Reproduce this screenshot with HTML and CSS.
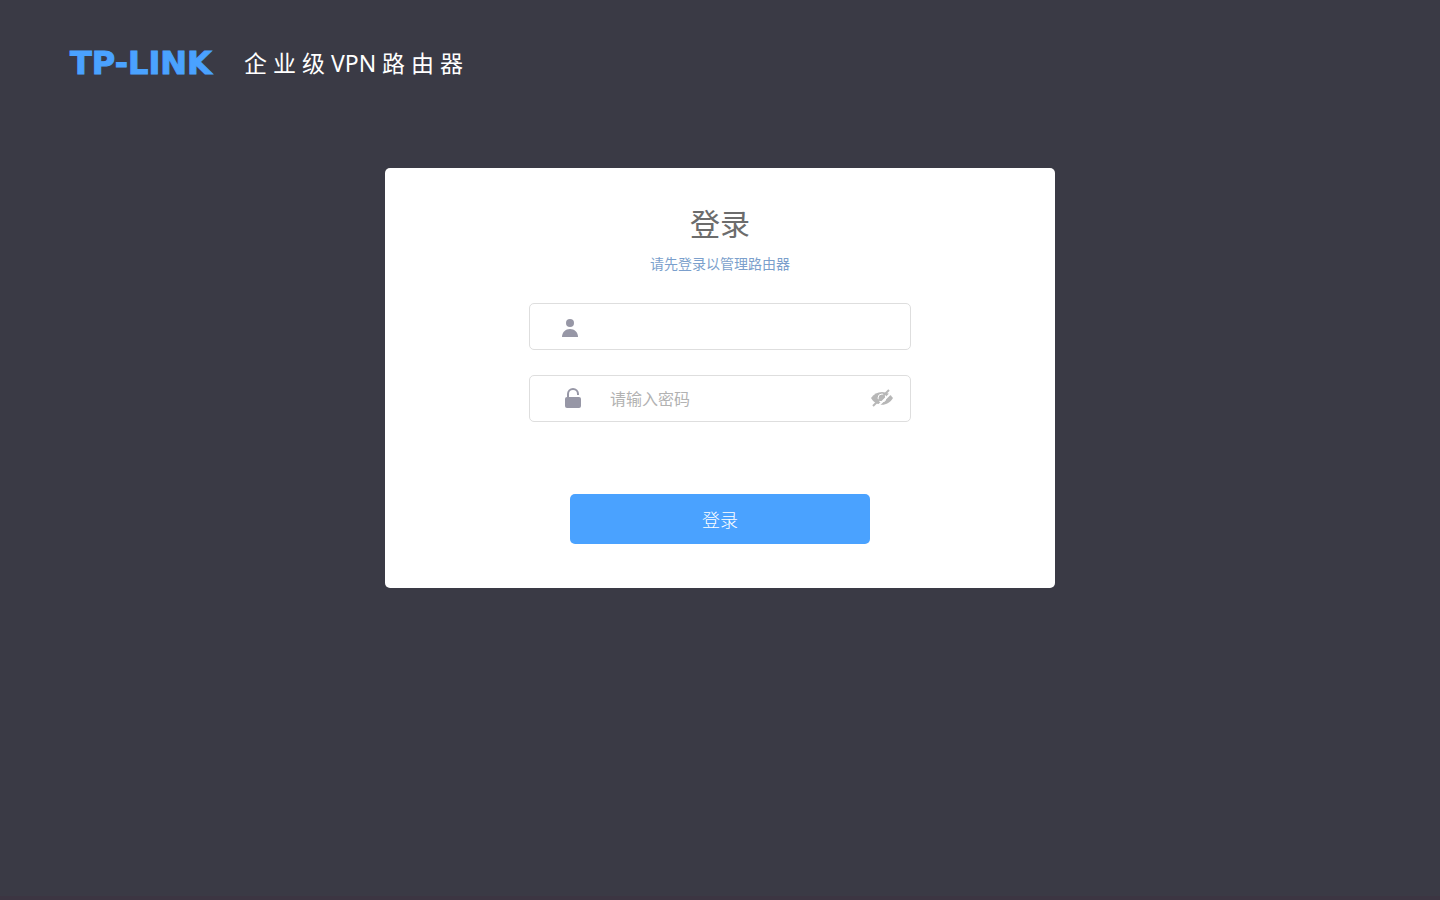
FILE: index.html
```html
<!DOCTYPE html>
<html lang="zh-CN">
<head>
<meta charset="utf-8">
<meta name="viewport" content="width=device-width, initial-scale=1">
<title>登录</title>
<link rel="stylesheet" href="styles.css">
</head>
<body class="page">
<header class="header">
  <span class="logo">TP-LINK</span>
  <span class="product">企 业 级 VPN 路 由 器</span>
</header>
<main class="main">
  <form class="card">
    <h1 class="title">登录</h1>
    <p class="hint">请先登录以管理路由器</p>
    <div class="field">
      <svg class="field-icon" viewBox="0 0 24 24" aria-hidden="true"><circle cx="10" cy="8" r="4"/><path d="M2 22c0-5 3.500-8 8-8s8 3 8 8z"/></svg>
      <input class="input" type="text" aria-label="用户名" autocomplete="username">
    </div>
    <div class="field">
      <svg class="field-icon" viewBox="0 0 24 24" aria-hidden="true"><rect x="5" y="10" width="16" height="11" rx="2"/><path class="shackle" d="M8 11V7a5 5 0 0 1 10 0v1"/></svg>
      <input class="input" type="password" aria-label="密码" placeholder="请输入密码" autocomplete="current-password">
      <button class="reveal" type="button" aria-label="显示密码">
        <svg class="eye" viewBox="0 0 24 20" aria-hidden="true"><path class="eye-fill" d="M1 9C6 1 18 1 23 9C18 18 6 18 1 9z"/><circle class="eye-ring" cx="12" cy="9" r="4"/><path class="eye-gap" d="M6 19L22 3"/><path class="slash" d="M3 17L19 1"/></svg>
      </button>
    </div>
    <button class="submit" type="submit">登录</button>
  </form>
</main>
</body>
</html>
```
FILE: styles.css
```css
* {
  box-sizing: border-box;
}

.page {
  display: flex;
  flex-direction: column;
  min-height: 100vh;
  margin: 0;
  border-bottom: 4px solid #3c3542;
  background: #3a3a45;
  font-family: "Noto Sans", "Noto Sans CJK SC", sans-serif;
}

.header {
  display: flex;
  align-items: center;
  gap: 20px;
  padding: 43px 70px 0;
  line-height: 40px;
}

.logo {
  min-width: 154px;
  color: #4aa2ff;
  font-family: "DejaVu Sans", sans-serif;
  font-size: 32px;
  font-weight: 700;
  -webkit-text-stroke: 1px #4aa2ff;
}

.product {
  color: #fff;
  font-size: 23px;
}

.main {
  display: flex;
  justify-content: center;
  padding: 85px 16px 40px;
}

.card {
  display: flex;
  flex-direction: column;
  align-items: center;
  width: 100%;
  max-width: 670px;
  padding: 36px 16px 44px;
  border-radius: 5px;
  background: #fff;
}

.title {
  margin: 0;
  color: #6c6c6c;
  font-size: 30px;
  font-weight: 400;
  line-height: 40px;
}

.hint {
  margin: 10px 0 29px;
  color: #7b9fcc;
  font-size: 14px;
  line-height: 20px;
}

.field {
  display: flex;
  align-items: center;
  width: 100%;
  max-width: 382px;
  margin-bottom: 25px;
  padding: 0 16px 0 30px;
  border: 1px solid #dedede;
  border-radius: 5px;
}

.field-icon {
  flex: none;
  width: 24px;
  height: 24px;
  margin-right: 26px;
  fill: #9797a6;
}

.shackle {
  fill: none;
  stroke: #9797a6;
  stroke-width: 2;
}

.input {
  flex: 1;
  min-width: 0;
  height: 45px;
  padding: 0;
  border: 0;
  outline: 0;
  background: transparent;
  color: #666;
  font-family: inherit;
  font-size: 16px;
}

.input::placeholder {
  color: #b2b2b2;
  opacity: 1;
}

.reveal {
  display: flex;
  padding: 0;
  border: 0;
  background: none;
  cursor: pointer;
}

.eye {
  width: 24px;
  height: 20px;
}

.eye-fill {
  fill: #b7b7b7;
}

.eye-ring {
  fill: #b7b7b7;
  stroke: #fff;
  stroke-width: 1;
}

.eye-gap {
  fill: none;
  stroke: #fff;
  stroke-width: 2;
}

.slash {
  fill: none;
  stroke: #b7b7b7;
  stroke-width: 2;
}

.submit {
  width: 100%;
  max-width: 300px;
  height: 50px;
  margin-top: 47px;
  border: 0;
  border-radius: 5px;
  background: #4aa2ff;
  color: #fff;
  font-family: inherit;
  font-size: 18px;
  font-weight: 300;
  cursor: pointer;
}
```
